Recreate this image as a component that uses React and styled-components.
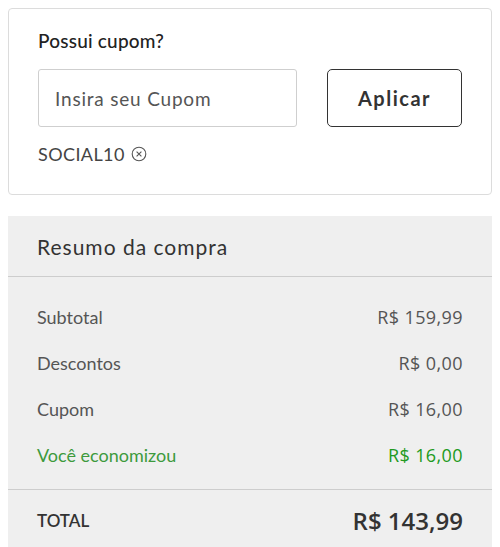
import React from "react";
import styled, { createGlobalStyle } from "styled-components";

const GlobalStyle = createGlobalStyle`
  body {
    margin: 8px;
    background: #fff;
    font-family: "Lato", "Open Sans", sans-serif;
  }
  * { box-sizing: border-box; }
`;

const Page = styled.div`
  width: 484px;
  display: flex;
  flex-direction: column;
  gap: 21px;
`;

const CouponCard = styled.section`
  border: 1px solid #dcdcdc;
  border-radius: 4px;
  padding: 20px 29px 29px;
  background: #fff;
`;

const Title = styled.h3`
  margin: 0 0 16px;
  font-size: 19px;
  line-height: 24px;
  font-weight: 500;
  letter-spacing: 0.2px;
  color: #222;
`;

const Form = styled.div`
  display: flex;
  gap: 30px;
`;

const Input = styled.input`
  flex: 1;
  min-width: 0;
  height: 58px;
  border: 1px solid #cfcfcf;
  border-radius: 3px;
  padding: 0 16px;
  font-family: "Lato", sans-serif;
  font-size: 19px;
  letter-spacing: 0.8px;
  color: #333;
  outline: none;
  &::placeholder { color: #555; }
`;

const Button = styled.button`
  width: 135px;
  height: 58px;
  border: 1.5px solid #333;
  border-radius: 5px;
  background: #fff;
  font-family: "Lato", sans-serif;
  font-weight: 700;
  font-size: 20px;
  letter-spacing: 1.5px;
  color: #333;
  cursor: pointer;
`;

const Applied = styled.div`
  margin-top: 16px;
  display: flex;
  align-items: center;
  gap: 6px;
  font-size: 18px;
  letter-spacing: 0.4px;
  line-height: 22px;
  color: #444;
  svg { display: block; }
`;

const Summary = styled.section`
  background: #efefef;
  min-height: 340px;
`;

const Header = styled.div`
  height: 61px;
  padding: 0 29px;
  display: flex;
  align-items: center;
  border-bottom: 1px solid #cdcdcd;
  font-size: 21px;
  letter-spacing: 1px;
  color: #333;
`;

const Rows = styled.div`
  padding: 17px 29px 11px;
  border-bottom: 1px solid #cdcdcd;
`;

const Row = styled.div`
  height: 46px;
  display: flex;
  align-items: center;
  justify-content: space-between;
  font-size: 18px;
  color: ${(p) => (p.$green ? "#3d9a3d" : "#555")};
`;

const Value = styled.span`
  font-family: "Open Sans", sans-serif;
  font-size: 18px;
  letter-spacing: 0.4px;
  color: ${(p) => (p.$green ? "#219a21" : "#555")};
`;

const TotalRow = styled.div`
  height: 60px;
  padding: 0 29px;
  display: flex;
  align-items: center;
  justify-content: space-between;
`;

const TotalLabel = styled.span`
  font-size: 17px;
  font-weight: 600;
  color: #333;
`;

const TotalValue = styled.span`
  font-family: "Open Sans", sans-serif;
  font-size: 24px;
  font-weight: 600;
  color: #333;
`;

const RemoveIcon = () => (
  <svg width="16" height="16" viewBox="0 0 16 16" fill="none" stroke="#555" strokeWidth="1.1">
    <circle cx="8" cy="8" r="6.8" />
    <path d="M5.6 5.6l4.8 4.8M10.4 5.6l-4.8 4.8" />
  </svg>
);

const rows = [
  { label: "Subtotal", value: "R$ 159,99" },
  { label: "Descontos", value: "R$ 0,00" },
  { label: "Cupom", value: "R$ 16,00" },
  { label: "Você economizou", value: "R$ 16,00", green: true },
];

export default function App() {
  return (
    <Page>
      <GlobalStyle />
      <CouponCard>
        <Title>Possui cupom?</Title>
        <Form>
          <Input placeholder="Insira seu Cupom" />
          <Button>Aplicar</Button>
        </Form>
        <Applied>
          SOCIAL10 <RemoveIcon />
        </Applied>
      </CouponCard>
      <Summary>
        <Header>Resumo da compra</Header>
        <Rows>
          {rows.map((r) => (
            <Row key={r.label} $green={r.green}>
              <span>{r.label}</span>
              <Value $green={r.green}>{r.value}</Value>
            </Row>
          ))}
        </Rows>
        <TotalRow>
          <TotalLabel>TOTAL</TotalLabel>
          <TotalValue>R$ 143,99</TotalValue>
        </TotalRow>
      </Summary>
    </Page>
  );
}
